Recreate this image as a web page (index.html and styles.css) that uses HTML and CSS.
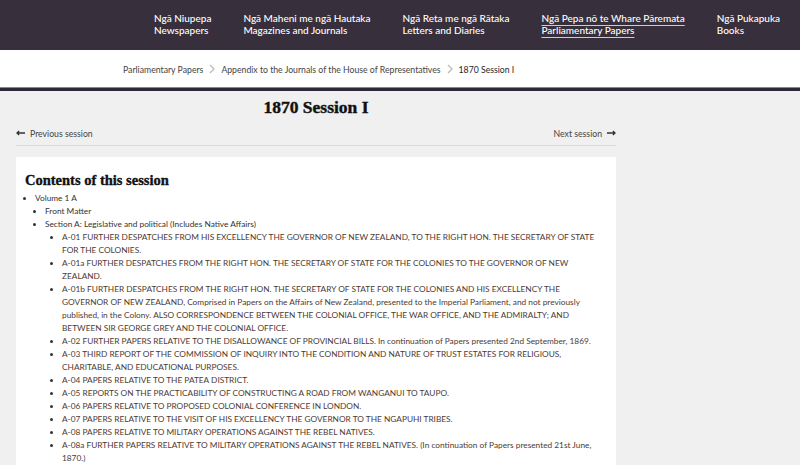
FILE: index.html
```html
<!DOCTYPE html>
<html lang="en">
<head>
<meta charset="utf-8">
<title>1870 Session I</title>
<link rel="stylesheet" href="styles.css">
</head>
<body>
<header class="site-header">
  <nav class="main-nav">
    <a class="nav-item" href="#"><span>Ngā Niupepa</span><span>Newspapers</span></a>
    <a class="nav-item" href="#"><span>Ngā Maheni me ngā Hautaka</span><span>Magazines and Journals</span></a>
    <a class="nav-item" href="#"><span>Ngā Reta me ngā Rātaka</span><span>Letters and Diaries</span></a>
    <a class="nav-item active" href="#"><span>Ngā Pepa nō te Whare Pāremata</span><span>Parliamentary Papers</span></a>
    <a class="nav-item" href="#"><span>Ngā Pukapuka</span><span>Books</span></a>
  </nav>
</header>
<div class="crumbs">
  <a href="#">Parliamentary Papers</a>
  <svg class="chev" viewBox="0 0 6 10" width="6" height="10"><path d="M1 1 L5 5 L1 9" fill="none" stroke="#bbb" stroke-width="1.3"/></svg>
  <a href="#">Appendix to the Journals of the House of Representatives</a>
  <svg class="chev" viewBox="0 0 6 10" width="6" height="10"><path d="M1 1 L5 5 L1 9" fill="none" stroke="#bbb" stroke-width="1.3"/></svg>
  <span class="current">1870 Session I</span>
</div>
<main class="page">
  <div class="main-col">
    <h1 class="title">1870 Session I</h1>
    <div class="pager">
      <a href="#" class="prev"><svg viewBox="0 0 10 6" width="9" height="6"><path d="M10 3 H2 M3.5 0.8 L1 3 L3.5 5.2" fill="none" stroke="#333" stroke-width="1.4"/></svg>Previous session</a>
      <a href="#" class="next">Next session<svg viewBox="0 0 10 6" width="9" height="6"><path d="M0 3 H8 M6.5 0.8 L9 3 L6.5 5.2" fill="none" stroke="#333" stroke-width="1.4"/></svg></a>
    </div>
    <section class="card">
      <h2 class="contents-title">Contents of this session</h2>
      <ul class="toc">
        <li>Volume 1 A
          <ul>
            <li>Front Matter</li>
            <li>Section A: Legislative and political (Includes Native Affairs)
              <ul class="papers">
                <li><a href="#">A-01 FURTHER DESPATCHES FROM HIS EXCELLENCY THE GOVERNOR OF NEW ZEALAND, TO THE RIGHT HON. THE SECRETARY OF STATE FOR THE COLONIES.</a></li>
                <li><a href="#">A-01a FURTHER DESPATCHES FROM THE RIGHT HON. THE SECRETARY OF STATE FOR THE COLONIES TO THE GOVERNOR OF NEW ZEALAND.</a></li>
                <li><a href="#">A-01b FURTHER DESPATCHES FROM THE RIGHT HON. THE SECRETARY OF STATE FOR THE COLONIES AND HIS EXCELLENCY THE GOVERNOR OF NEW ZEALAND, Comprised in Papers on the Affairs of New Zealand, presented to the Imperial Parliament, and not previously published, in the Colony. ALSO CORRESPONDENCE BETWEEN THE COLONIAL OFFICE, THE WAR OFFICE, AND THE ADMIRALTY; AND BETWEEN SIR GEORGE GREY AND THE COLONIAL OFFICE.</a></li>
                <li><a href="#">A-02 FURTHER PAPERS RELATIVE TO THE DISALLOWANCE OF PROVINCIAL BILLS. In continuation of Papers presented 2nd September, 1869.</a></li>
                <li><a href="#">A-03 THIRD REPORT OF THE COMMISSION OF INQUIRY INTO THE CONDITION AND NATURE OF TRUST ESTATES FOR RELIGIOUS, CHARITABLE, AND EDUCATIONAL PURPOSES.</a></li>
                <li><a href="#">A-04 PAPERS RELATIVE TO THE PATEA DISTRICT.</a></li>
                <li><a href="#">A-05 REPORTS ON THE PRACTICABILITY OF CONSTRUCTING A ROAD FROM WANGANUI TO TAUPO.</a></li>
                <li><a href="#">A-06 PAPERS RELATIVE TO PROPOSED COLONIAL CONFERENCE IN LONDON.</a></li>
                <li><a href="#">A-07 PAPERS RELATIVE TO THE VISIT OF HIS EXCELLENCY THE GOVERNOR TO THE NGAPUHI TRIBES.</a></li>
                <li><a href="#">A-08 PAPERS RELATIVE TO MILITARY OPERATIONS AGAINST THE REBEL NATIVES.</a></li>
                <li><a href="#">A-08a FURTHER PAPERS RELATIVE TO MILITARY OPERATIONS AGAINST THE REBEL NATIVES. (In continuation of Papers presented 21st June, 1870.)</a></li>
              </ul>
            </li>
          </ul>
        </li>
      </ul>
    </section>
  </div>
</main>
</body>
</html>
```
FILE: styles.css
```css
* { box-sizing: border-box; }
html, body { margin: 0; padding: 0; }
body {
  font-family: Lato, "Noto Sans", "DejaVu Sans", sans-serif;
  background: #f0f0f0;
  color: #333;
}
a { color: inherit; text-decoration: none; }

.site-header {
  background: #372f3b;
  height: 50px;
}
.main-nav {
  display: flex;
  gap: 32px;
  padding: 11.5px 0 0 154px;
  white-space: nowrap;
}
.nav-item {
  display: flex;
  flex-direction: column;
  color: #fff;
  font-size: 10px;
  line-height: 12.5px;
  font-weight: 500;
}
.nav-item.active span {
  text-decoration: underline;
  text-decoration-color: #cfc8d6;
  text-underline-offset: 3px;
  text-decoration-thickness: 1px;
}

.crumbs {
  background: #fff;
  height: 41px;
  display: flex;
  align-items: center;
  gap: 6px;
  padding: 0 0 0 123px;
  font-size: 8.7px;
  color: #444;
  border-bottom: 3px solid #2f2837;
  box-shadow: 0 -1px 0 #8d8594 inset;
}
.crumbs .current { color: #1e1e1e; }
.chev { display: block; }

.page { padding: 0 0 0 16px; }
.main-col { width: 600px; }

.title {
  font-family: "Liberation Serif", "DejaVu Serif", serif;
  font-weight: 900;
  font-size: 17.5px;
  text-align: center;
  margin: 0;
  padding-top: 4px;
  line-height: 24px;
  color: #111;
  -webkit-text-stroke: 0.4px #111;
}
.pager {
  display: flex;
  justify-content: space-between;
  font-size: 8.7px;
  line-height: 11px;
  color: #444;
  padding: 8.5px 0 6.5px;
  border-bottom: 1px solid #dcdcdc;
}
.pager a { display: flex; align-items: center; gap: 5px; }

.card {
  background: #fff;
  margin-top: 11px;
  padding: 13px 9px 10px;
}
.contents-title {
  font-family: "Liberation Serif", "DejaVu Serif", serif;
  font-weight: 900;
  font-size: 14.5px;
  margin: 0 0 2px;
  line-height: 20px;
  color: #111;
  -webkit-text-stroke: 0.35px #111;
}
.toc, .toc ul {
  margin: 0;
  padding: 0 0 0 10px;
  list-style: disc;
}
.toc { padding-left: 10px; }
.toc ul ul { padding-left: 17px; }
.toc li {
  font-size: 8.3px;
  line-height: 13px;
  color: #333;
}
.toc li::marker { font-size: 8px; }
.papers a { color: #4d3a33; }
```
